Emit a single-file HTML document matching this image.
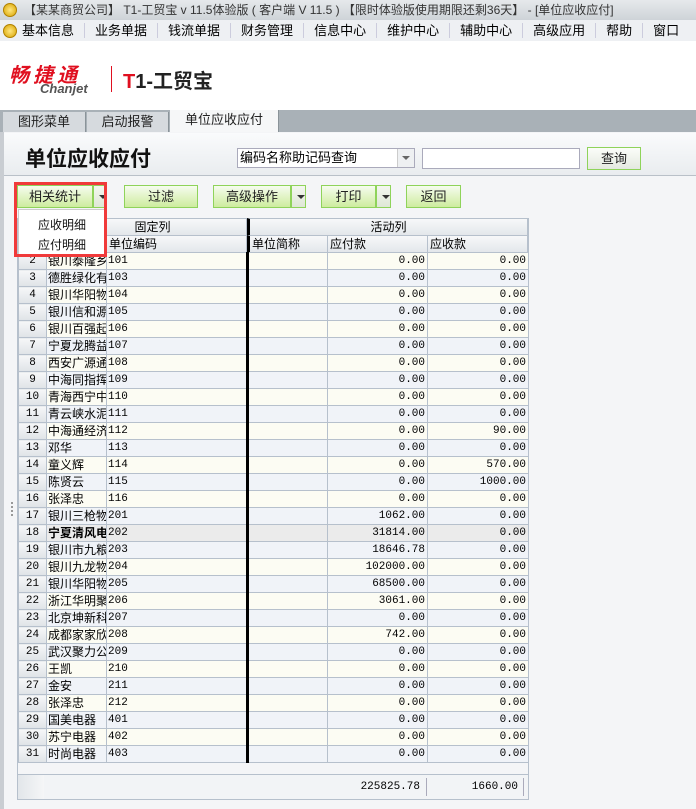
<!DOCTYPE html>
<html><head><meta charset="utf-8"><style>
*{margin:0;padding:0;box-sizing:border-box}
body{width:696px;height:809px;overflow:hidden;position:relative;background:#f4f5f7;font-family:"Liberation Sans","Noto Sans CJK SC","WenQuanYi Zen Hei",sans-serif;font-size:12px;color:#000}
.a{position:absolute}
.title{left:0;top:0;width:696px;height:20px;background:linear-gradient(#e6e9ec,#ced3d8);color:#333;font-size:12px;line-height:20px;padding-left:24px;white-space:nowrap}
.coin{width:14px;height:14px;border-radius:50%;background:radial-gradient(#ffe680,#d8a400);border:1px solid #b08000}
.menu{left:0;top:20px;width:696px;height:21px;background:#eef0f3;line-height:21px;font-size:13px;white-space:nowrap}
.menu span{display:inline-block;border-right:1px solid #ccd;padding:0 10px;line-height:15px}
.logo{left:0;top:41px;width:696px;height:69px;background:#fff}
.tabs{left:0;top:110px;width:696px;height:22px;background:#a9b1b7}
.tab{top:112px;height:20px;background:#d6dade;border-right:1px solid #8a9399;font-size:13px;line-height:20px;text-align:center;color:#222}
.btn{height:23px;border:1px solid #8fd35a;background:linear-gradient(#f6fcef,#cdec9e);text-align:center;line-height:21px;font-size:13px;color:#222}
.dd{height:23px;border:1px solid #8fd35a;background:linear-gradient(#f4f7f0,#dfe7d6)}
.dd:after{content:"";position:absolute;left:5px;top:9px;border:4px solid transparent;border-top:4px solid #333}
table{border-collapse:collapse;table-layout:fixed;position:absolute;left:18px;top:252px;width:510px}
td{height:17px;border:1px solid #b6c0cc;font-size:12px;line-height:15px;white-space:nowrap;overflow:hidden;padding:0 1px}
td.n{background:linear-gradient(#f6f7f8,#dfe3e7);text-align:center;font-family:"Liberation Mono",monospace;font-size:11px}
td.c{font-family:"Liberation Mono",monospace;font-size:11px}
td.r{text-align:right;font-family:"Liberation Mono",monospace;font-size:11px;padding-right:2px}
tr.e td:not(.n){background:#fcfcf3}
tr.o td:not(.n){background:#f0f3f8}
tr.s td:not(.n){background:#ebebeb}
tr.s td:nth-child(2){font-weight:bold}
td.k{border-right:3px solid #000}
.hd{background:linear-gradient(#f7f8f9,#e3e7eb);border:1px solid #b6c0cc;font-size:12px;line-height:16px}
</style></head><body>
<div class="a title">【某某商贸公司】 T1-工贸宝 v 11.5体验版 ( 客户端 V 11.5 ) 【限时体验版使用期限还剩36天】 - [单位应收应付]</div>
<div class="a coin" style="left:3px;top:3px"></div>
<div class="a menu"><span style="padding-left:22px">基本信息</span><span>业务单据</span><span>钱流单据</span><span>财务管理</span><span>信息中心</span><span>维护中心</span><span>辅助中心</span><span>高级应用</span><span>帮助</span><span style="border:0">窗口</span></div>
<div class="a coin" style="left:3px;top:24px"></div>
<div class="a logo"></div>
<div class="a" style="left:9px;top:59px;font-size:20px;font-weight:bold;font-style:italic;color:#e01020;letter-spacing:4px">畅捷通</div>
<div class="a" style="left:40px;top:81px;font-size:13px;font-weight:bold;font-style:italic;color:#555">Chanjet</div>
<div class="a" style="left:111px;top:66px;width:1px;height:26px;background:#e01020"></div>
<div class="a" style="left:123px;top:65px;font-size:20px;font-weight:bold;color:#222"><span style="color:#e01020">T</span>1-工贸宝</div>
<div class="a tabs"></div>
<div class="a tab" style="left:3px;width:83px">图形菜单</div>
<div class="a tab" style="left:87px;width:82px">启动报警</div>
<div class="a tab" style="left:170px;width:109px;background:#f6f7f8;top:110px;height:22px">单位应收应付</div>
<div class="a" style="left:0;top:132px;width:4px;height:677px;background:#c9cdd2"></div>
<div class="a" style="left:4px;top:133px;width:692px;height:43px;background:linear-gradient(#fafbfc,#e9ecef);border-bottom:1px solid #b9c0c8"></div>
<div class="a" style="left:25px;top:143px;font-size:21px;font-weight:bold;color:#111">单位应收应付</div>
<div class="a" style="left:237px;top:148px;width:178px;height:20px;background:#fff;border:1px solid #aab;font-size:13px;line-height:18px;padding-left:2px">编码名称助记码查询</div>
<div class="a" style="left:397px;top:149px;width:17px;height:18px;background:#eef0f2;border-left:1px solid #ccc"></div>
<div class="a" style="left:402px;top:156px;border:4px solid transparent;border-top:4px solid #666"></div>
<div class="a" style="left:422px;top:148px;width:158px;height:21px;background:#fff;border:1px solid #aab"></div>
<div class="a btn" style="left:587px;top:147px;width:54px;height:23px;background:linear-gradient(#fbfdf9,#e4e9e0)">查询</div>
<div class="a btn" style="left:17px;top:185px;width:76px">相关统计</div>
<div class="a dd" style="left:93px;top:185px;width:14px"></div>
<div class="a btn" style="left:124px;top:185px;width:74px">过滤</div>
<div class="a btn" style="left:213px;top:185px;width:78px">高级操作</div>
<div class="a dd" style="left:291px;top:185px;width:15px"></div>
<div class="a btn" style="left:321px;top:185px;width:55px">打印</div>
<div class="a dd" style="left:376px;top:185px;width:15px"></div>
<div class="a btn" style="left:406px;top:185px;width:55px">返回</div>
<div class="a hd" style="left:18px;top:218px;width:229px;height:18px;text-align:center;padding-left:40px">固定列</div>
<div class="a hd" style="left:247px;top:218px;width:281px;height:18px;text-align:center;border-left:3px solid #000">活动列</div>
<div class="a hd" style="left:18px;top:235px;width:89px;height:18px"></div>
<div class="a hd" style="left:106px;top:235px;width:141px;height:18px;padding-left:2px">单位编码</div>
<div class="a hd" style="left:247px;top:235px;width:81px;height:18px;border-left:3px solid #000;padding-left:2px">单位简称</div>
<div class="a hd" style="left:327px;top:235px;width:101px;height:18px;padding-left:2px">应付款</div>
<div class="a hd" style="left:427px;top:235px;width:101px;height:18px;padding-left:2px">应收款</div>
<table>
<colgroup><col style="width:28px"><col style="width:60px"><col style="width:141px"><col style="width:80px"><col style="width:100px"><col style="width:101px"></colgroup>
<tr class="e"><td class="n">2</td><td>银川泰隆乡</td><td class="c k">101</td><td></td><td class="r">0.00</td><td class="r">0.00</td></tr>
<tr class="o"><td class="n">3</td><td>德胜绿化有</td><td class="c k">103</td><td></td><td class="r">0.00</td><td class="r">0.00</td></tr>
<tr class="e"><td class="n">4</td><td>银川华阳物</td><td class="c k">104</td><td></td><td class="r">0.00</td><td class="r">0.00</td></tr>
<tr class="o"><td class="n">5</td><td>银川信和源</td><td class="c k">105</td><td></td><td class="r">0.00</td><td class="r">0.00</td></tr>
<tr class="e"><td class="n">6</td><td>银川百强起</td><td class="c k">106</td><td></td><td class="r">0.00</td><td class="r">0.00</td></tr>
<tr class="o"><td class="n">7</td><td>宁夏龙腾益</td><td class="c k">107</td><td></td><td class="r">0.00</td><td class="r">0.00</td></tr>
<tr class="e"><td class="n">8</td><td>西安广源通</td><td class="c k">108</td><td></td><td class="r">0.00</td><td class="r">0.00</td></tr>
<tr class="o"><td class="n">9</td><td>中海同指挥</td><td class="c k">109</td><td></td><td class="r">0.00</td><td class="r">0.00</td></tr>
<tr class="e"><td class="n">10</td><td>青海西宁中</td><td class="c k">110</td><td></td><td class="r">0.00</td><td class="r">0.00</td></tr>
<tr class="o"><td class="n">11</td><td>青云峡水泥</td><td class="c k">111</td><td></td><td class="r">0.00</td><td class="r">0.00</td></tr>
<tr class="e"><td class="n">12</td><td>中海通经济</td><td class="c k">112</td><td></td><td class="r">0.00</td><td class="r">90.00</td></tr>
<tr class="o"><td class="n">13</td><td>邓华</td><td class="c k">113</td><td></td><td class="r">0.00</td><td class="r">0.00</td></tr>
<tr class="e"><td class="n">14</td><td>童义辉</td><td class="c k">114</td><td></td><td class="r">0.00</td><td class="r">570.00</td></tr>
<tr class="o"><td class="n">15</td><td>陈贤云</td><td class="c k">115</td><td></td><td class="r">0.00</td><td class="r">1000.00</td></tr>
<tr class="e"><td class="n">16</td><td>张泽忠</td><td class="c k">116</td><td></td><td class="r">0.00</td><td class="r">0.00</td></tr>
<tr class="o"><td class="n">17</td><td>银川三枪物</td><td class="c k">201</td><td></td><td class="r">1062.00</td><td class="r">0.00</td></tr>
<tr class="s"><td class="n">18</td><td>宁夏清风电</td><td class="c k">202</td><td></td><td class="r">31814.00</td><td class="r">0.00</td></tr>
<tr class="o"><td class="n">19</td><td>银川市九粮</td><td class="c k">203</td><td></td><td class="r">18646.78</td><td class="r">0.00</td></tr>
<tr class="e"><td class="n">20</td><td>银川九龙物</td><td class="c k">204</td><td></td><td class="r">102000.00</td><td class="r">0.00</td></tr>
<tr class="o"><td class="n">21</td><td>银川华阳物</td><td class="c k">205</td><td></td><td class="r">68500.00</td><td class="r">0.00</td></tr>
<tr class="e"><td class="n">22</td><td>浙江华明聚</td><td class="c k">206</td><td></td><td class="r">3061.00</td><td class="r">0.00</td></tr>
<tr class="o"><td class="n">23</td><td>北京坤新科</td><td class="c k">207</td><td></td><td class="r">0.00</td><td class="r">0.00</td></tr>
<tr class="e"><td class="n">24</td><td>成都家家欣</td><td class="c k">208</td><td></td><td class="r">742.00</td><td class="r">0.00</td></tr>
<tr class="o"><td class="n">25</td><td>武汉聚力公</td><td class="c k">209</td><td></td><td class="r">0.00</td><td class="r">0.00</td></tr>
<tr class="e"><td class="n">26</td><td>王凯</td><td class="c k">210</td><td></td><td class="r">0.00</td><td class="r">0.00</td></tr>
<tr class="o"><td class="n">27</td><td>金安</td><td class="c k">211</td><td></td><td class="r">0.00</td><td class="r">0.00</td></tr>
<tr class="e"><td class="n">28</td><td>张泽忠</td><td class="c k">212</td><td></td><td class="r">0.00</td><td class="r">0.00</td></tr>
<tr class="o"><td class="n">29</td><td>国美电器</td><td class="c k">401</td><td></td><td class="r">0.00</td><td class="r">0.00</td></tr>
<tr class="e"><td class="n">30</td><td>苏宁电器</td><td class="c k">402</td><td></td><td class="r">0.00</td><td class="r">0.00</td></tr>
<tr class="o"><td class="n">31</td><td>时尚电器</td><td class="c k">403</td><td></td><td class="r">0.00</td><td class="r">0.00</td></tr>
</table>
<div class="a" style="left:17px;top:218px;width:1px;height:582px;background:#b6c0cc"></div>
<div class="a" style="left:528px;top:218px;width:1px;height:582px;background:#b6c0cc"></div>
<div class="a" style="left:17px;top:799px;width:512px;height:1px;background:#b6c0cc"></div>
<div class="a" style="left:18px;top:774px;width:510px;height:25px;background:#f2f4f6;border-top:1px solid #b6c0cc"></div>
<div class="a" style="left:18px;top:775px;width:26px;height:24px;background:linear-gradient(90deg,#e2e6ea,#f5f6f7)"></div>
<div class="a" style="left:340px;top:781px;width:80px;text-align:right;font-family:'Liberation Mono',monospace;font-size:11px">225825.78</div>
<div class="a" style="left:426px;top:778px;width:1px;height:18px;background:#aab"></div>
<div class="a" style="left:430px;top:781px;width:88px;text-align:right;font-family:'Liberation Mono',monospace;font-size:11px">1660.00</div>
<div class="a" style="left:523px;top:778px;width:1px;height:18px;background:#aab"></div>
<div class="a" style="left:11px;top:502px;width:2px;height:14px;border-left:2px dotted #999"></div>
<div class="a" style="left:18px;top:209px;width:87px;height:46px;background:#fff;border:1px solid #ccc"></div>
<div class="a" style="left:38px;top:216px;font-size:12px;color:#111">应收明细</div>
<div class="a" style="left:38px;top:236px;font-size:12px;color:#111">应付明细</div>
<div class="a" style="left:14px;top:182px;width:93px;height:75px;border:3px solid #f03a3a"></div>
</body></html>
